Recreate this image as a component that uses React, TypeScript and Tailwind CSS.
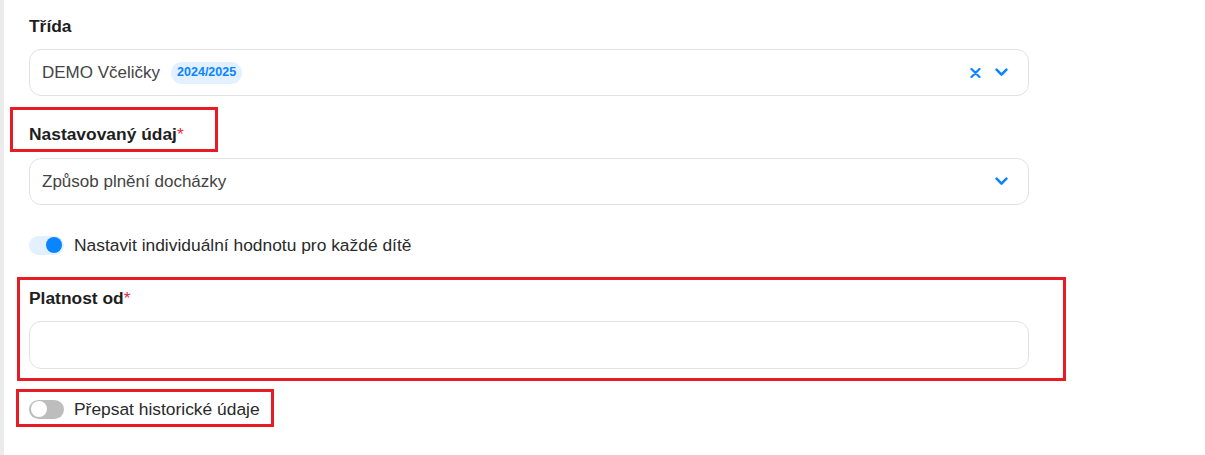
import React from 'react';

function Chevron() {
  return (
    <svg width="13" height="9" viewBox="0 0 13 9" className="shrink-0">
      <polyline
        points="1.6,1.6 6.5,6.6 11.4,1.6"
        fill="none"
        stroke="#0a84ff"
        strokeWidth="2.6"
        strokeLinecap="round"
        strokeLinejoin="round"
      />
    </svg>
  );
}

function ClearIcon() {
  return (
    <svg width="11" height="10" viewBox="0 0 11 10" className="shrink-0">
      <path
        d="M1.5 1 L9.5 9 M9.5 1 L1.5 9"
        fill="none"
        stroke="#0a84ff"
        strokeWidth="2.2"
        strokeLinecap="round"
      />
    </svg>
  );
}

function Label({ text, required }: { text: string; required?: boolean }) {
  return (
    <div className="h-[20px] text-[17.4px] leading-[20px] font-bold text-[#1e1e1e]">
      {text}
      {required && <span className="text-[#e5283a] font-normal">*</span>}
    </div>
  );
}

function Toggle({ on, label }: { on: boolean; label: string }) {
  return (
    <div className="flex items-center h-[20px] gap-[10px]">
      <div
        className={
          on
            ? 'w-[35px] h-[19px] rounded-full bg-[#e3f0ff] flex items-center justify-end px-[2px]'
            : 'w-[35px] h-[19px] rounded-full bg-[#bdbdbd] flex items-center justify-start px-[2px]'
        }
      >
        <div
          className={
            on
              ? 'w-[16px] h-[16px] rounded-full bg-[#0a84ff]'
              : 'w-[16px] h-[16px] rounded-full bg-white'
          }
        />
      </div>
      <span className="text-[17.4px] text-[#2a2a2a]">{label}</span>
    </div>
  );
}

const boxClass =
  'w-[1000px] rounded-[12px] border border-[#e2e2e2] bg-white flex items-center pl-[12px] pr-[20px]';

export default function App() {
  return (
    <div
      className="relative flex w-[1205px] h-[455px] bg-white overflow-hidden"
      style={{ fontFamily: '"Liberation Sans", Arial, sans-serif' }}
    >
      <div className="w-[4px] bg-[#ebebeb] shrink-0" />

      <div className="flex flex-col pl-[25px] pt-[16px]">
        <Label text="Třída" />
        <div className={`${boxClass} h-[47px] mt-[13px]`}>
          <span className="text-[17px] text-[#444]">DEMO Včeličky</span>
          <span className="ml-[11px] h-[22px] px-[6px] rounded-full bg-[#e3f0ff] text-[#0a84ff] text-[12.5px] font-bold flex items-center">
            2024/2025
          </span>
          <div className="ml-auto flex items-center gap-[14px]">
            <ClearIcon />
            <Chevron />
          </div>
        </div>

        <div className="mt-[28px]">
          <Label text="Nastavovaný údaj" required />
        </div>
        <div className={`${boxClass} h-[47px] mt-[14px]`}>
          <span className="text-[17px] text-[#444]">Způsob plnění docházky</span>
          <div className="ml-auto flex items-center">
            <Chevron />
          </div>
        </div>

        <div className="mt-[30px]">
          <Toggle on label="Nastavit individuální hodnotu pro každé dítě" />
        </div>

        <div className="mt-[33px]">
          <Label text="Platnost od" required />
        </div>
        <div className={`${boxClass} h-[48px] mt-[13px]`} />

        <div className="mt-[30px]">
          <Toggle on={false} label="Přepsat historické údaje" />
        </div>
      </div>

      {/* red annotation boxes */}
      <div className="absolute left-[10px] top-[107px] w-[208px] h-[45px] border-[3px] border-[#e81c24]" />
      <div className="absolute left-[17px] top-[277px] w-[1049px] h-[104px] border-[3px] border-[#e81c24]" />
      <div className="absolute left-[16px] top-[389px] w-[258px] h-[38px] border-[3px] border-[#e81c24]" />
    </div>
  );
}
